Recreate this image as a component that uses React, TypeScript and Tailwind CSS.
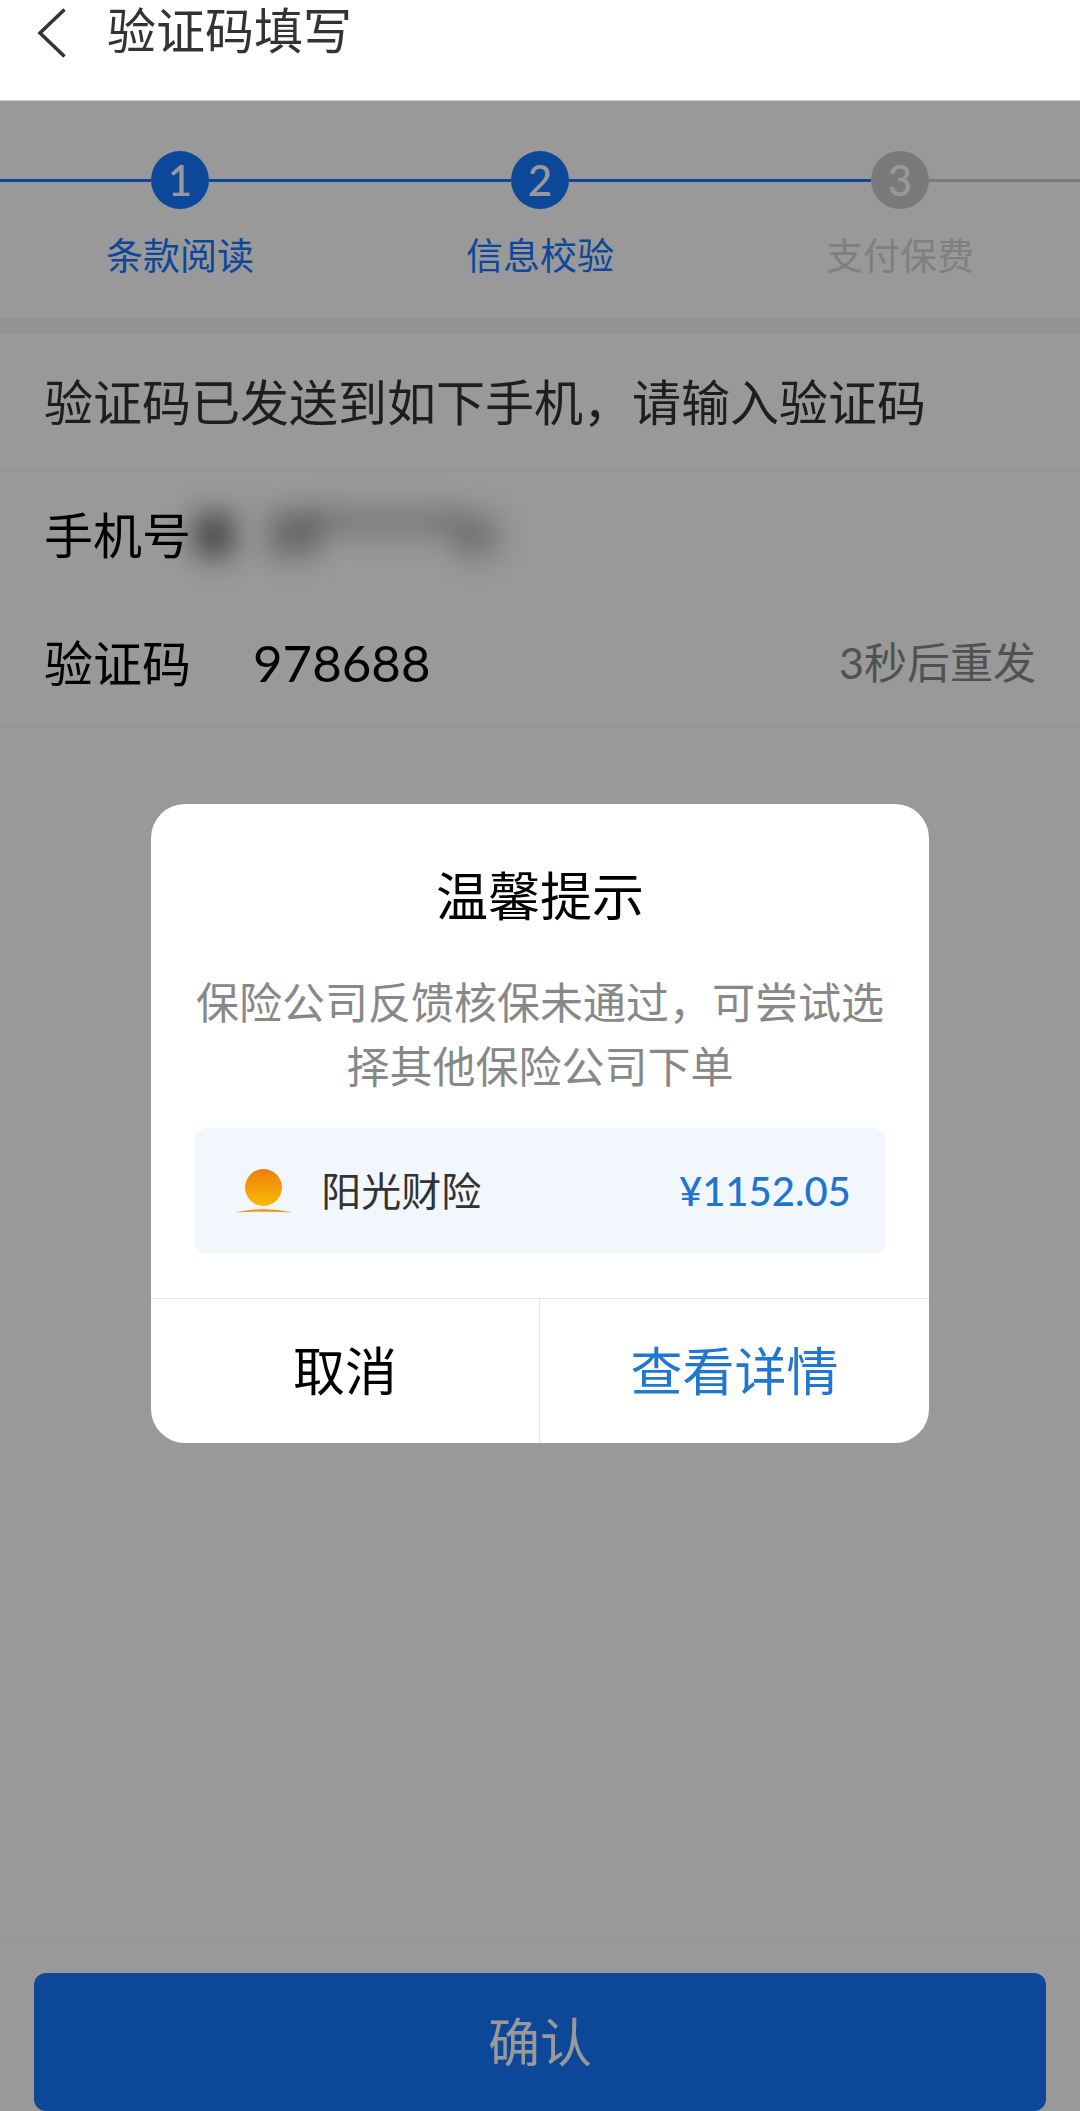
import React, { useState } from 'react';

interface Step {
  id: number;
  label: string;
  reached: boolean;
}

const steps: Step[] = [
  { id: 1, label: '条款阅读', reached: true },
  { id: 2, label: '信息校验', reached: true },
  { id: 3, label: '支付保费', reached: false },
];

const Header: React.FC = () => (
  <header className="flex items-center bg-white pb-10 pl-9 text-[#333]">
    <button type="button" aria-label="返回" className="mr-[39px] h-[60px] w-8">
      <svg viewBox="0 0 32 60" className="h-full w-full" fill="none" stroke="currentColor" strokeWidth="3.5">
        <path d="M28.500 9.500L4 33l24.500 23.500" />
      </svg>
    </button>
    <h1 className="text-[49px] leading-[60px]">验证码填写</h1>
  </header>
);

const Stepper: React.FC = () => (
  <ol className="grid grid-cols-3 pt-[50px] pb-10">
    {steps.map((step, index) => {
      const nextReached = index < steps.length - 1;
      return (
        <li key={step.id} className="flex flex-col items-center">
          <div className="flex w-full items-center">
            <span className="h-[3px] flex-1 bg-[#1677ff]"></span>
            <span
              className={`flex h-[58px] w-[58px] items-center justify-center rounded-full text-[42px] leading-none font-medium text-white ${
                step.reached ? 'bg-[#1677ff]' : 'bg-[#ccc]'
              }`}
            >
              {step.id}
            </span>
            <span className={`h-[3px] flex-1 ${nextReached ? 'bg-[#1677ff]' : 'bg-[#ccc]'}`}></span>
          </div>
          <span className={`mt-[25px] text-[37px] leading-[44px] ${step.reached ? 'text-[#1677ff]' : 'text-[#d4d4d4]'}`}>
            {step.label}
          </span>
        </li>
      );
    })}
  </ol>
);

// Smudge that hides the phone number
const MaskedPhone: React.FC = () => (
  <svg viewBox="0 0 360 128" className="absolute top-0 left-[164px] h-32 w-[360px]" aria-hidden="true">
    <defs>
      <filter id="smudge" x="-30%" y="-80%" width="160%" height="260%" colorInterpolationFilters="sRGB">
        <feGaussianBlur stdDeviation="14" />
      </filter>
    </defs>
    <g filter="url(#smudge)" fill="#000">
      <rect x="30" y="42" width="40" height="44" opacity="0.52" />
      <rect x="104" y="40" width="50" height="46" opacity="0.3" />
      <rect x="140" y="36" width="160" height="30" opacity="0.2" />
      <rect x="290" y="44" width="44" height="42" opacity="0.24" />
    </g>
  </svg>
);

const SunLogo: React.FC = () => (
  <svg viewBox="0 0 58 44" className="h-11 w-[58px]" aria-hidden="true">
    <defs>
      <linearGradient id="sun" x1="0" y1="0" x2="0" y2="1">
        <stop offset="0" stopColor="#ec7f0c" />
        <stop offset="1" stopColor="#fbba05" />
      </linearGradient>
    </defs>
    <circle cx="28.500" cy="18.500" r="18.500" fill="url(#sun)" />
    <path d="M0 43.500Q29 36.500 58 43.500Q29 42 0 43.500Z" fill="#ea9b2c" />
  </svg>
);

const TipDialog: React.FC<{ onClose: () => void }> = ({ onClose }) => (
  <div className="absolute inset-0 flex items-center justify-center bg-black/40 pt-[34px]">
    <div
      role="dialog"
      aria-modal="true"
      aria-labelledby="tip-title"
      className="w-[72%] overflow-hidden rounded-[34px] bg-white"
    >
      <div className="px-11 pt-[62px] pb-11 text-center">
        <h2 id="tip-title" className="text-[52px] leading-[60px] text-black">
          温馨提示
        </h2>
        <p className="mt-[45px] text-[43px] leading-[64px] text-[#888]">
          保险公司反馈核保未通过，可尝试选择其他保险公司下单
        </p>
        <div className="mt-[29px] flex h-[126px] items-center rounded-xl bg-[#f2f7fe] pr-[34px] pl-10">
          <SunLogo />
          <span className="ml-7 text-[40px] text-[#333]">阳光财险</span>
          <span className="ml-auto text-[40px] font-medium text-[#2173cf]">¥1152.05</span>
        </div>
      </div>
      <div className="grid grid-cols-2 border-t border-[#e5e5e5] text-[52px] leading-[60px]">
        <button type="button" onClick={onClose} className="border-r border-[#e5e5e5] py-[42px] text-black">
          取消
        </button>
        <button type="button" className="py-[42px] text-[#2176d2]">
          查看详情
        </button>
      </div>
    </div>
  </div>
);

const App: React.FC = () => {
  const [code, setCode] = useState('978688');
  const [tipVisible, setTipVisible] = useState(true);

  return (
    <div className="flex min-h-screen flex-col bg-white font-[Lato,'Noto_Sans_CJK_SC',sans-serif]">
      <Header />

      <main className="relative flex flex-1 flex-col border-t border-[#ccc]">
        <Stepper />

        <form className="flex flex-1 flex-col border-t-[16px] border-[#f5f5f9] text-[49px] leading-[50px]">
          <p className="border-b border-[#f0f0f0] px-11 py-[43px] text-[#333]">
            验证码已发送到如下手机，请输入验证码
          </p>

          <div className="relative flex h-32 items-center px-11 text-black">
            <span>手机号</span>
            <MaskedPhone />
          </div>

          <div className="flex h-32 items-center border-b border-[#f0f0f0] px-11 text-black">
            <label htmlFor="sms-code">验证码</label>
            <input
              id="sms-code"
              inputMode="numeric"
              value={code}
              onChange={(e) => setCode(e.target.value)}
              className="ml-[62px] min-w-0 flex-1 bg-transparent text-[51px] outline-none"
            />
            <span className="text-[43px] text-[#888]">3秒后重发</span>
          </div>

          <div className="mt-auto border-t border-[#f5f5f5] px-[34px] pt-[34px]">
            <button
              type="submit"
              onClick={(e) => e.preventDefault()}
              className="w-full rounded-xl bg-[#1677ff] py-[39px] text-[52px] leading-[60px] text-white"
            >
              确认
            </button>
          </div>
        </form>

        {tipVisible && <TipDialog onClose={() => setTipVisible(false)} />}
      </main>
    </div>
  );
};

export default App;
